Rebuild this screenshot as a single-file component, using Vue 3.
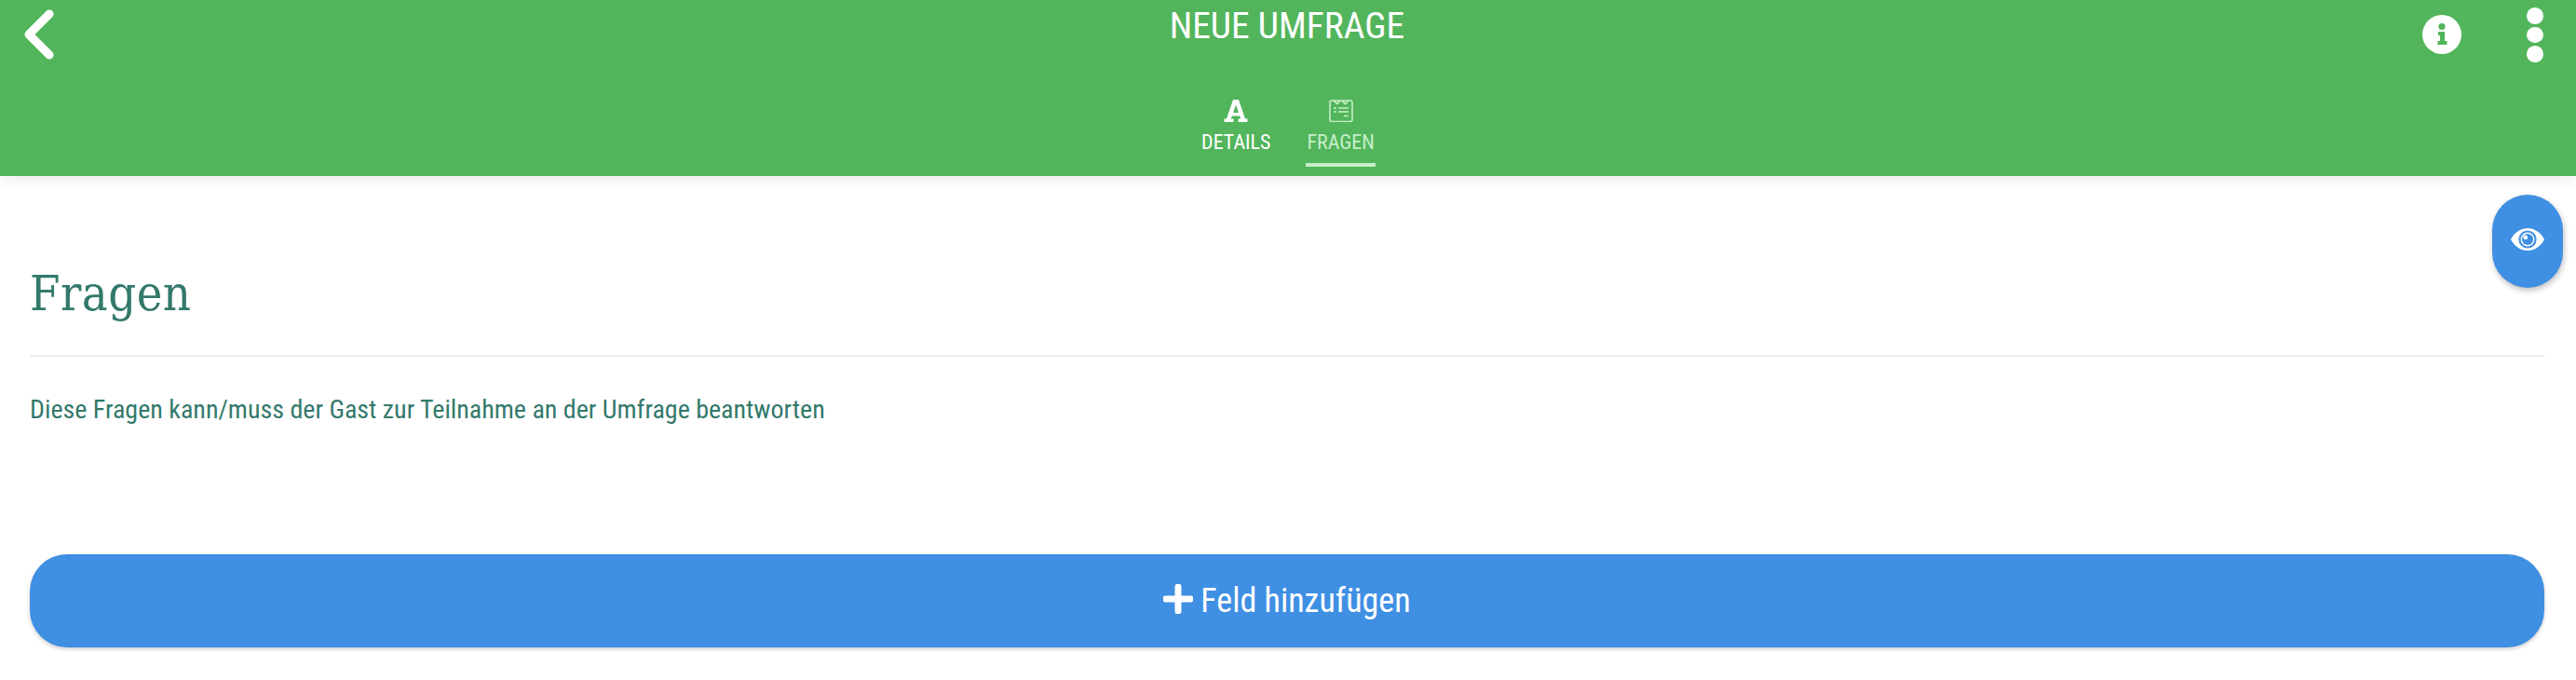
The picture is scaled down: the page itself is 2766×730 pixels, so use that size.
<script setup>
const tabs = [
  { key: 'details', label: 'DETAILS' },
  { key: 'fragen', label: 'FRAGEN' }
];
</script>

<template>
  <div class="page">
    <header class="topbar">
      <div class="bar-row">
        <button class="back-btn" aria-label="Zurück">
          <svg width="34" height="54" viewBox="0 0 34 54">
            <path d="M28 5 L6 27 L28 49" fill="none" stroke="#fff" stroke-width="9" stroke-linecap="round" stroke-linejoin="round" />
          </svg>
        </button>
        <h1 class="title">NEUE UMFRAGE</h1>
        <div class="bar-actions">
          <svg class="info" width="42" height="42" viewBox="0 0 42 42">
            <circle cx="21" cy="21" r="21" fill="#fff" />
            <circle cx="21" cy="12.5" r="3.6" fill="#52b55b" />
            <path d="M17 18h7v10h2.5v4h-10v-4h2.5v-6h-2z" fill="#52b55b" />
          </svg>
          <div class="dots">
            <span></span>
            <span></span>
            <span></span>
          </div>
        </div>
      </div>
      <nav class="tabs">
        <div v-for="tab in tabs" :key="tab.key" class="tab" :class="{ active: tab.key === 'fragen' }">
          <svg v-if="tab.key === 'details'" width="26" height="24" viewBox="0 0 26 24">
            <path d="M10 0h6l7 20.5h2.500V24H15.500v-3.500h2.700l-1-3H8.800l-1 3h2.700V24H.5v-3.500H3zM13 5.500l-3 8.500h6z" fill="#fff" fill-rule="evenodd" />
          </svg>
          <svg v-else width="26" height="24" viewBox="0 0 26 24" fill="none" stroke="#c6efc9" stroke-width="1.600">
            <rect x="1" y="1" width="24" height="22.500" rx="2" />
            <path d="M5 1l4 3.500L12 1M14 1l3.500 3.500L21 1" />
            <path d="M5 9h3M10 9h11M5 13h3M10 13h11M16 17.500h5" />
          </svg>
          <span class="tab-label">{{ tab.label }}</span>
        </div>
      </nav>
    </header>

    <button class="preview-btn" aria-label="Vorschau">
      <svg width="36" height="24" viewBox="0 0 36 24">
        <path d="M0 12C4 4.500 10.500 0 18 0s14 4.500 18 12c-4 7.500-10.500 12-18 12S4 19.500 0 12z" fill="#fff" />
        <circle cx="18" cy="12" r="8.500" fill="#fff" stroke="#3f8fe3" stroke-width="2.200" />
        <circle cx="18" cy="12" r="6" fill="#3f8fe3" />
        <circle cx="15.800" cy="9.800" r="2.400" fill="#fff" />
      </svg>
    </button>

    <main class="content">
      <h2 class="heading">Fragen</h2>
      <p class="intro">Diese Fragen kann/muss der Gast zur Teilnahme an der Umfrage beantworten</p>
      <button class="add-btn">
        <svg class="plus" width="32" height="32" viewBox="0 0 32 32">
          <path d="M16 3v26M3 16h26" stroke="#fff" stroke-width="7" stroke-linecap="round" />
        </svg>
        <span>Feld hinzufügen</span>
      </button>
    </main>
  </div>
</template>

<style>
body {
  background: #fff;
}
</style>

<style scoped>
.page {
  position: relative;
  width: 2766px;
  height: 730px;
  overflow: hidden;
  background: #fff;
  font-family: "Roboto Condensed", "Liberation Sans Narrow", Roboto, sans-serif;
  font-stretch: 75%;
}

.topbar {
  height: 189px;
  background: #52b55b;
  box-shadow: 0 6px 14px rgba(0, 0, 0, 0.06);
  color: #fff;
}

.bar-row {
  display: grid;
  grid-template-columns: 1fr auto 1fr;
  height: 90px;
  padding: 0 35px 0 25px;
}

.back-btn {
  width: 34px;
  height: 54px;
  margin-top: 10px;
  padding: 0;
  border: none;
  background: none;
}

.title {
  margin: 5px 0 0 8px;
  font-size: 39.5px;
  font-weight: 400;
  line-height: 46px;
}

.bar-actions {
  display: flex;
  justify-content: flex-end;
  gap: 70px;
  padding-top: 16px;
}

.dots {
  display: flex;
  flex-direction: column;
  gap: 3px;
  margin-top: -8px;
}

.dots span {
  width: 18px;
  height: 17.500px;
  border-radius: 50%;
  background: #fff;
}

.tabs {
  display: flex;
  justify-content: center;
  gap: 37px;
  padding-top: 17px;
}

.tab {
  display: flex;
  flex-direction: column;
  align-items: center;
  height: 72px;
  padding: 0 1px;
  box-sizing: border-box;
}

.tab.active {
  border-bottom: 4px solid #c6efc9;
  color: #c6efc9;
}

.tab-label {
  margin-top: 7px;
  font-size: 22px;
  line-height: 30px;
}

.preview-btn {
  position: absolute;
  top: 209px;
  right: 14px;
  display: flex;
  align-items: center;
  justify-content: center;
  width: 76px;
  height: 100px;
  padding: 0 0 4px;
  border: none;
  border-radius: 38px;
  background: #3f8fe3;
  box-shadow: 1px 3px 6px rgba(0, 0, 0, 0.25);
}

.content {
  display: flex;
  flex-direction: column;
  padding: 0 34px 0 32px;
}

.heading {
  margin: 93px 0 0;
  padding: 0 0 32px;
  border-bottom: 2px solid #eeeeee;
  color: #33796b;
  font-family: "Roboto Slab", "DejaVu Serif", serif;
  font-size: 52px;
  font-stretch: 87.5%;
  font-weight: 400;
  letter-spacing: 0.5px;
  line-height: 67px;
}

.intro {
  margin: 39px 0 0;
  color: #33796b;
  font-size: 28px;
  line-height: 36px;
}

.add-btn {
  display: flex;
  align-items: center;
  justify-content: center;
  gap: 8px;
  height: 100px;
  margin-top: 137px;
  border: none;
  border-radius: 40px;
  background: #3f8fe3;
  box-shadow: 0 2px 4px rgba(0, 0, 0, 0.2);
  color: #fff;
  font-family: inherit;
  font-stretch: inherit;
  font-size: 36px;
}

.plus {
  margin-top: -4px;
}
</style>
